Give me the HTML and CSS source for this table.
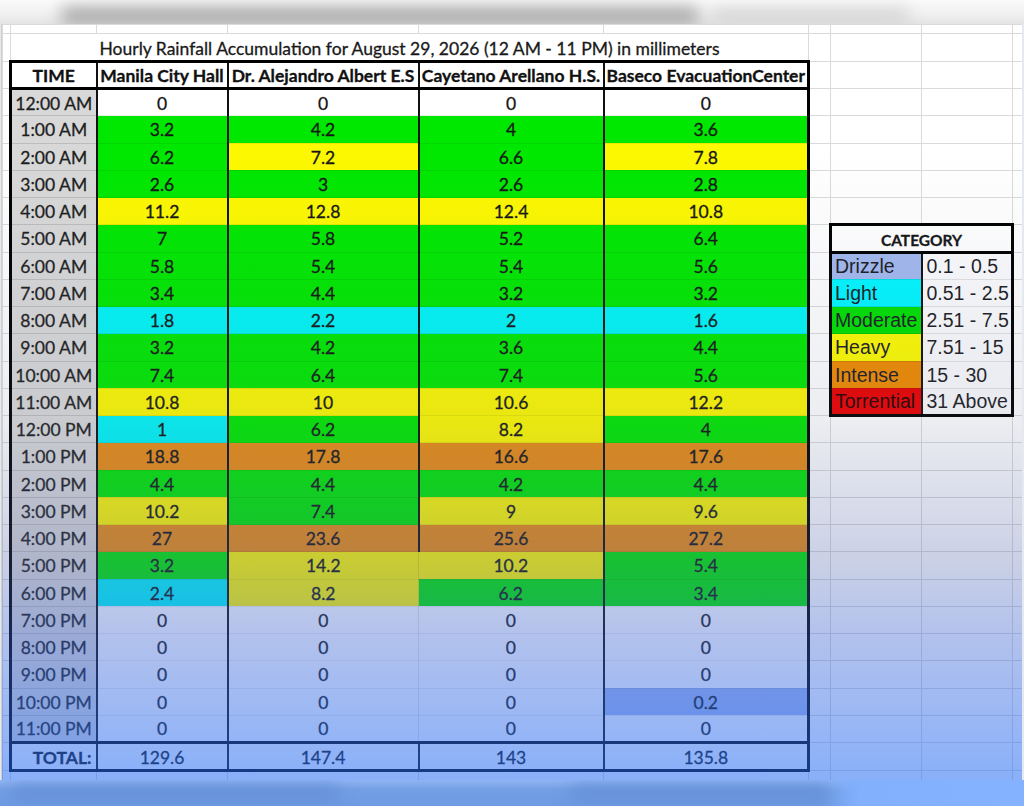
FILE: index.html
```html
<!DOCTYPE html>
<html lang="en">
<head>
<meta charset="utf-8">
<title>Hourly Rainfall Accumulation</title>
<link rel="stylesheet" href="styles.css">
</head>
<body>
<div class="page">
  <div class="topblur"><div class="smear"></div><div class="smear2"></div></div>
  <div class="sheet">
    <table class="grid">
      <colgroup>
        <col class="w-sl"><col class="w-a"><col class="w-b"><col class="w-c"><col class="w-d"><col class="w-e"><col class="w-f"><col class="w-g"><col class="w-h"><col class="w-i">
      </colgroup>
      <tbody>
        <tr class="r0"><td></td><td></td><td></td><td></td><td></td><td></td><td></td><td></td><td></td><td></td></tr>
        <tr class="rt"><td></td><td class="title" colspan="5">Hourly Rainfall Accumulation for August 29, 2026 (12 AM - 11 PM) in millimeters</td><td></td><td></td><td></td><td></td></tr>
        <tr class="rh"><td></td><td class="hd hfirst">TIME</td><td class="hd">Manila City Hall</td><td class="hd">Dr. Alejandro Albert E.S</td><td class="hd">Cayetano Arellano H.S.</td><td class="hd hlast">Baseco EvacuationCenter</td><td></td><td></td><td></td><td></td></tr>

        <tr class="r"><td></td><td class="t">12:00 AM</td><td class="v cw">0</td><td class="v cw">0</td><td class="v cw">0</td><td class="v cw e">0</td><td></td><td></td><td></td><td></td></tr>
        <tr class="r"><td></td><td class="t">1:00 AM</td><td class="v cg">3.2</td><td class="v cg">4.2</td><td class="v cg">4</td><td class="v cg e">3.6</td><td></td><td></td><td></td><td></td></tr>
        <tr class="r"><td></td><td class="t">2:00 AM</td><td class="v cg">6.2</td><td class="v cy">7.2</td><td class="v cg">6.6</td><td class="v cy e">7.8</td><td></td><td></td><td></td><td></td></tr>
        <tr class="r"><td></td><td class="t">3:00 AM</td><td class="v cg">2.6</td><td class="v cg">3</td><td class="v cg">2.6</td><td class="v cg e">2.8</td><td></td><td></td><td></td><td></td></tr>
        <tr class="r"><td></td><td class="t">4:00 AM</td><td class="v cy">11.2</td><td class="v cy">12.8</td><td class="v cy">12.4</td><td class="v cy e">10.8</td><td></td><td></td><td></td><td></td></tr>
        <tr class="r"><td></td><td class="t">5:00 AM</td><td class="v cg">7</td><td class="v cg">5.8</td><td class="v cg">5.2</td><td class="v cg e">6.4</td><td></td><td class="lh" colspan="2">CATEGORY</td><td></td></tr>
        <tr class="r"><td></td><td class="t">6:00 AM</td><td class="v cg">5.8</td><td class="v cg">5.4</td><td class="v cg">5.4</td><td class="v cg e">5.6</td><td></td><td class="lk kd">Drizzle</td><td class="lv">0.1 - 0.5</td><td></td></tr>
        <tr class="r"><td></td><td class="t">7:00 AM</td><td class="v cg">3.4</td><td class="v cg">4.4</td><td class="v cg">3.2</td><td class="v cg e">3.2</td><td></td><td class="lk kl">Light</td><td class="lv">0.51 - 2.5</td><td></td></tr>
        <tr class="r"><td></td><td class="t">8:00 AM</td><td class="v cc">1.8</td><td class="v cc">2.2</td><td class="v cc">2</td><td class="v cc e">1.6</td><td></td><td class="lk km">Moderate</td><td class="lv">2.51 - 7.5</td><td></td></tr>
        <tr class="r"><td></td><td class="t">9:00 AM</td><td class="v cg">3.2</td><td class="v cg">4.2</td><td class="v cg">3.6</td><td class="v cg e">4.4</td><td></td><td class="lk kh">Heavy</td><td class="lv">7.51 - 15</td><td></td></tr>
        <tr class="r"><td></td><td class="t">10:00 AM</td><td class="v cg">7.4</td><td class="v cg">6.4</td><td class="v cg">7.4</td><td class="v cg e">5.6</td><td></td><td class="lk ki">Intense</td><td class="lv">15 - 30</td><td></td></tr>
        <tr class="r"><td></td><td class="t">11:00 AM</td><td class="v cy">10.8</td><td class="v cy">10</td><td class="v cy">10.6</td><td class="v cy e">12.2</td><td></td><td class="lk kt lb">Torrential</td><td class="lv lb">31 Above</td><td></td></tr>
        <tr class="r"><td></td><td class="t">12:00 PM</td><td class="v cc">1</td><td class="v cg">6.2</td><td class="v cy">8.2</td><td class="v cg e">4</td><td></td><td></td><td></td><td></td></tr>
        <tr class="r"><td></td><td class="t">1:00 PM</td><td class="v co">18.8</td><td class="v co">17.8</td><td class="v co">16.6</td><td class="v co e">17.6</td><td></td><td></td><td></td><td></td></tr>
        <tr class="r"><td></td><td class="t">2:00 PM</td><td class="v cg">4.4</td><td class="v cg">4.4</td><td class="v cg">4.2</td><td class="v cg e">4.4</td><td></td><td></td><td></td><td></td></tr>
        <tr class="r"><td></td><td class="t">3:00 PM</td><td class="v cy">10.2</td><td class="v cg">7.4</td><td class="v cy">9</td><td class="v cy e">9.6</td><td></td><td></td><td></td><td></td></tr>
        <tr class="r"><td></td><td class="t">4:00 PM</td><td class="v co">27</td><td class="v co">23.6</td><td class="v co">25.6</td><td class="v co e">27.2</td><td></td><td></td><td></td><td></td></tr>
        <tr class="r"><td></td><td class="t">5:00 PM</td><td class="v cg">3.2</td><td class="v cy nr">14.2</td><td class="v cy nl">10.2</td><td class="v cg e">5.4</td><td></td><td></td><td></td><td></td></tr>
        <tr class="r"><td></td><td class="t">6:00 PM</td><td class="v cc">2.4</td><td class="v cy nr">8.2</td><td class="v cg nl">6.2</td><td class="v cg e">3.4</td><td></td><td></td><td></td><td></td></tr>
        <tr class="r"><td></td><td class="t">7:00 PM</td><td class="v cw">0</td><td class="v cw nr">0</td><td class="v cw nl">0</td><td class="v cw e">0</td><td></td><td></td><td></td><td></td></tr>
        <tr class="r"><td></td><td class="t">8:00 PM</td><td class="v cw">0</td><td class="v cw nr">0</td><td class="v cw nl">0</td><td class="v cw e">0</td><td></td><td></td><td></td><td></td></tr>
        <tr class="r"><td></td><td class="t">9:00 PM</td><td class="v cw">0</td><td class="v cw nr">0</td><td class="v cw nl">0</td><td class="v cw e">0</td><td></td><td></td><td></td><td></td></tr>
        <tr class="r"><td></td><td class="t">10:00 PM</td><td class="v cw">0</td><td class="v cw nr">0</td><td class="v cw nl">0</td><td class="v cd e">0.2</td><td></td><td></td><td></td><td></td></tr>
        <tr class="r"><td></td><td class="t">11:00 PM</td><td class="v cw">0</td><td class="v cw nr">0</td><td class="v cw nl">0</td><td class="v cw e">0</td><td></td><td></td><td></td><td></td></tr>

        <tr class="rtot"><td></td><td class="tot tl">TOTAL:</td><td class="tot">129.6</td><td class="tot">147.4</td><td class="tot">143</td><td class="tot e">135.8</td><td></td><td></td><td></td><td></td></tr>
        <tr class="rtail"><td></td><td></td><td></td><td></td><td></td><td></td><td></td><td></td><td></td><td></td></tr>
      </tbody>
    </table>
  </div>
  <div class="bottomblur"><div class="bsmear"></div><div class="bsmear2"></div></div>
</div>
</body>
</html>
```

FILE: styles.css
```css
* { box-sizing: border-box; }

html, body {
  margin: 0;
  padding: 0;
}

body {
  width: 1024px;
  height: 806px;
  overflow: hidden;
  background: #e4e8f0;
  font-family: Lato, "Open Sans", sans-serif;
  color: #111;
}

.page {
  display: flex;
  flex-direction: column;
  width: 1024px;
}

/* blurred top edge */
.topblur {
  height: 24px;
  display: flex;
  overflow: hidden;
  background: linear-gradient(#fafafa, #f0f0f0 60%, #e4e4e4);
}
.topblur .smear {
  flex: none;
  margin: 7px 0 0 60px;
  width: 640px;
  height: 18px;
  border-radius: 9px;
  background: #a9a9a9;
  filter: blur(8px);
}
.topblur .smear2 {
  flex: none;
  margin: 9px 0 0 10px;
  width: 200px;
  height: 14px;
  border-radius: 7px;
  background: #d2d2d2;
  filter: blur(8px);
}

/* spreadsheet */
.sheet {
  position: relative;
  margin-left: 1px;
  width: 1021px;
  height: 756px;
  overflow: hidden;
  background: #ffffff;
  border-left: 1px solid #cfcfcf;
}
.sheet::after {
  content: "";
  position: absolute;
  inset: 0;
  pointer-events: none;
  background: linear-gradient(to bottom,
    rgba(0, 0, 0, 0) 0px,
    rgba(0, 0, 0, 0) 126px,
    rgba(100, 110, 140, 0.12) 396px,
    rgba(80, 100, 170, 0.30) 536px,
    rgba(60, 100, 210, 0.40) 616px,
    rgba(40, 110, 245, 0.55) 756px);
}

.grid {
  border-collapse: collapse;
  table-layout: fixed;
  width: 1020px;
}
.w-sl { width: 8px; }
.w-a { width: 86px; }
.w-b { width: 131px; }
.w-c { width: 191px; }
.w-d { width: 185px; }
.w-e { width: 205px; }
.w-f { width: 22px; }
.w-g { width: 91px; }
.w-h { width: 91px; }
.w-i { width: 10px; }

.grid td {
  border: 1px solid #dadada;
  padding: 0;
  font-size: 17.5px;
  line-height: 20px;
  white-space: nowrap;
  overflow: visible;
  text-align: center;
  vertical-align: middle;
  -webkit-text-stroke: 0.3px currentColor;
}

.r0 { height: 9px; }
.rt { height: 28px; }
.rh { height: 27px; }
.r { height: 27.25px; }
.rtot { height: 28px; }
.rtail { height: 10px; }

.title {
  padding-top: 4px !important;
  font-size: 17.5px;
  color: #1a1a1a;
}

/* header row */
.grid td.hd {
  font-weight: 700;
  color: #111;
  background: #fff;
  border-top: 3px solid #000;
  border-bottom: 3px solid #000;
  border-left: 2px solid #111;
  border-right: 2px solid #111;
  padding-top: 2px;
}
.grid td.hfirst { border-left: 3px solid #000; }
.grid td.hlast { border-right: 3px solid #000; }

/* time column */
.grid td.t {
  background: #d8d8d8;
  color: #1e1e1e;
  border-left: 3px solid #000;
  border-right: 2px solid #111;
  border-top: 1px solid #bcbcbc;
  border-bottom: 1px solid #bcbcbc;
  padding-top: 2px;
}

/* value cells */
.grid td.v {
  border-left: 2px solid #111;
  border-right: 2px solid #111;
  border-top: 1px solid rgba(0, 0, 0, 0.07);
  border-bottom: 1px solid rgba(0, 0, 0, 0.07);
  padding-top: 2px;
  color: #161616;
}
.grid td.v.e { border-right: 3px solid #000; }
.grid td.v.nr { border-right: 1px solid rgba(0, 0, 0, 0.1); }
.grid td.v.nl { border-left: 1px solid rgba(0, 0, 0, 0.1); }

.cw { background: #ffffff; }
.cg { background: #00e800; }
.cy { background: #fcf800; }
.cc { background: #00f4f6; }
.co { background: #ea8c10; }
.cd { background: #a2b8ee; }

/* total row */
.grid td.tot {
  border-top: 3px solid #000;
  border-bottom: 3px solid #000;
  border-left: 2px solid #111;
  border-right: 2px solid #111;
  padding-top: 2px;
  background: #fff;
}
.grid td.tot.tl {
  font-weight: 700;
  text-align: right;
  padding-right: 4px;
  border-left: 3px solid #000;
}
.grid td.tot.e { border-right: 3px solid #000; }

/* legend */
.grid td.lh {
  font-size: 15.5px;
  font-weight: 700;
  background: #fff;
  color: #151515;
  border-top: 3px solid #000;
  border-left: 3px solid #000;
  border-right: 3px solid #000;
  border-bottom: 3px solid #000;
  padding-top: 3px;
}
.grid td.lk,
.grid td.lv {
  font-family: "Liberation Sans", Arial, sans-serif;
  font-size: 19.5px;
  line-height: 22px;
  text-align: left;
  color: #1c1c24;
  -webkit-text-stroke: 0;
  border-top: 1px solid rgba(0, 0, 0, 0.1);
  border-bottom: 1px solid rgba(0, 0, 0, 0.1);
}
.grid td.lk {
  padding-left: 3px;
  border-left: 3px solid #000;
  border-right: 2px solid #111;
}
.grid td.lv {
  padding-left: 4px;
  background: #fbfbfd;
  border-right: 3px solid #000;
}
.grid td.lb { border-bottom: 3px solid #000; }

.kd { background: #a2b8ee; }
.kl { background: #00f6ff; }
.km { background: #00e000; }
.kh { background: #fcfa00; }
.ki { background: #f08a00; }
.kt { background: #ec0000; color: #2a0000 !important; }

/* blurred bottom edge */
.bottomblur {
  height: 26px;
  display: flex;
  overflow: hidden;
  background:
    linear-gradient(90deg, rgba(130, 176, 253, 0) 0, rgba(130, 176, 253, 0) 80%, #82b0fd 84%, #84b2ff 100%),
    linear-gradient(#90b4f2, #729ee4 40%, #6e9be2);
}
.bottomblur .bsmear {
  flex: none;
  margin: 6px 0 0 10px;
  width: 330px;
  height: 16px;
  border-radius: 8px;
  background: #6690d8;
  filter: blur(8px);
}
.bottomblur .bsmear2 {
  flex: none;
  margin: 6px 0 0 230px;
  width: 260px;
  height: 16px;
  border-radius: 8px;
  background: #6590d8;
  filter: blur(8px);
}
```
